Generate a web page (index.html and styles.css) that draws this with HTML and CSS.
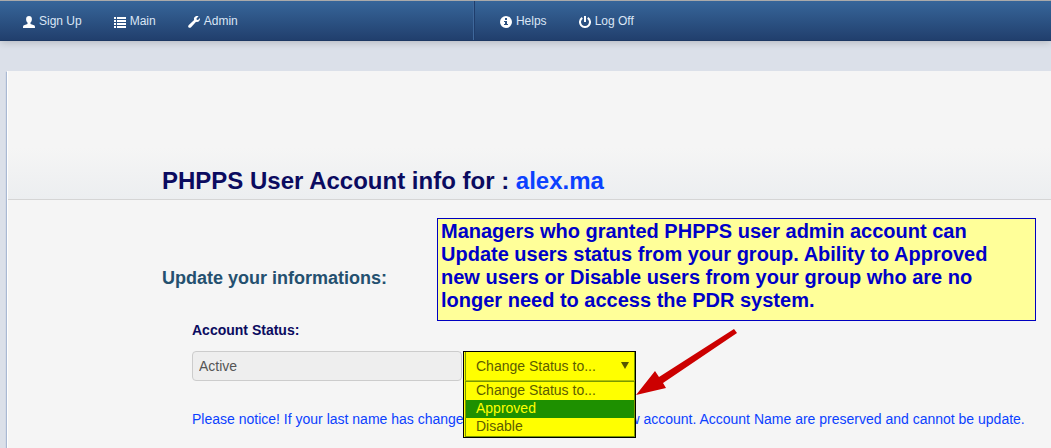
FILE: index.html
```html
<!DOCTYPE html>
<html lang="en">
<head>
    <meta charset="UTF-8">
    <meta name="viewport" content="width=device-width, initial-scale=1.0">
    <title>PHPPS User Account</title>
    <link rel="stylesheet" href="styles.css">
</head>
<body>
    <nav class="navbar">
        <div class="nav-group nav-main">
            <a href="#">
                <svg viewBox="0 0 12 12"><path d="M6 0C4.200 0 3.100 1.100 3.100 2.900c0 1.700.6 2.900 1.400 3.600v1.400L1 9.300C.2 9.700 0 10.200 0 12h12c0-1.800-.2-2.300-1-2.700L7.500 7.900V6.500c.8-.7 1.400-1.900 1.400-3.600C8.900 1.100 7.800 0 6 0z"/></svg>
                Sign Up
            </a>
            <a href="#">
                <svg viewBox="0 0 12 12"><path d="M0 1h2v2H0zM3 1h9v2H3zM0 4h2v2H0zM3 4h9v2H3zM0 7h2v2H0zM3 7h9v2H3zM0 10h2v2H0zM3 10h9v2H3z"/></svg>
                Main
            </a>
            <a href="#">
                <svg viewBox="0 0 12 12"><path d="M10.600.3 8.500 2.400l.2 1.300 1.300.3 2-2.100c.2 1.700-.3 2.900-1.300 3.600-.8.500-1.700.6-2.600.3l-5 5.400c-.7.800-1.800.9-2.500.2s-.6-1.800.2-2.500l5.300-4.900C5.600 2.200 6.200 1 7.400.4c1-.5 2.100-.5 3.200-.1z"/></svg>
                Admin
            </a>
        </div>
        <div class="nav-group nav-side">
            <a href="#">
                <svg viewBox="0 0 12 12"><path fill-rule="evenodd" d="M6 0a6 6 0 1 0 0 12A6 6 0 0 0 6 0zM5 2h2v2H5zM4 5h3v3h1v1H4V8h1V6H4z"/></svg>
                Helps
            </a>
            <a href="#">
                <svg viewBox="0 0 12 12"><path class="stroke" d="M3.300 1.800a5 5 0 1 0 5.400 0M6 0v6"/></svg>
                Log Off
            </a>
        </div>
    </nav>

    <main class="page">
        <header class="page-header">
            <h1>PHPPS User Account info for : <span>alex.ma</span></h1>
        </header>

        <form class="account">
            <h2>Update your informations:</h2>
            <div class="fields">
                <label for="status">Account Status:</label>
                <div class="row">
                    <input type="text" id="status" value="Active" readonly>
                    <div class="picker">
                        <div class="picker-open">
                            <select class="picker-box" aria-label="Change status">
                                <option>Change Status to...</option>
                            </select>
                            <span class="caret"></span>
                            <select class="picker-list" size="3" aria-label="New status">
                                <option>Change Status to...</option>
                                <option selected>Approved</option>
                                <option>Disable</option>
                            </select>
                        </div>
                    </div>
                </div>
                <p class="notice">Please notice! If your last name has changed, please sign up with a new account. Account Name are preserved and cannot be update.</p>
            </div>
        </form>

        <!-- Help callout -->
        <aside class="note">Managers who granted PHPPS user admin account can Update users status from your group. Ability to Approved new users or Disable users from your group who are no longer need to access the PDR system.</aside>
        <svg class="arrow" viewBox="0 0 102 70"><path d="M0 67 19 43l4 6L98 1l3 4L27 55l3 5z"/></svg>
    </main>
</body>
</html>
```

FILE: styles.css
```css
* {
    box-sizing: border-box;
}
body {
    margin: 0;
    min-height: 100vh;
    overflow: hidden;
    font-family: "Liberation Sans", Arial, sans-serif;
    font-size: 14px;
    background-color: #dbe0e9;
}
.navbar {
    position: relative;
    display: flex;
    height: 41px;
    border-top: 1px solid #aaa;
    border-bottom: 1px solid #1d3863;
    background: linear-gradient(#37669a, #213f6d);
    box-shadow: 0 1px 8px rgba(0, 0, 0, 0.2);
}
.nav-group {
    display: flex;
    align-items: center;
}
.nav-main {
    width: calc(45% + 1px);
    padding-left: 7px;
    border-right: 1px solid #3f689b;
}
.nav-side {
    padding-left: 9px;
    border-left: 1px solid #1f3d6b;
}
.navbar a {
    display: flex;
    align-items: center;
    gap: 4px;
    padding: 0 16px;
    font-size: 12px;
    color: #dbe6f5;
    text-decoration: none;
}
.navbar svg {
    width: 12px;
    height: 12px;
    margin-top: 2px;
    fill: #fff;
}
.navbar .stroke {
    fill: none;
    stroke: #fff;
    stroke-width: 2;
}
.page {
    position: relative;
    margin: 30px 0 0 7px;
    min-height: calc(100vh - 71px);
    background: #f5f5f5;
    border-left: 1px solid #fff;
    box-shadow: -1px 1px 1px #a9b9d3;
}
.page-header {
    padding: 95px 0 4px 154px;
    border-bottom: 1px solid #d5d5d5;
    background: linear-gradient(#f5f5f5 60%, #eceef0);
}
h1 {
    margin: 0;
    font-size: 24px;
    line-height: 29px;
    color: #0b0b60;
}
h1 span {
    color: #0b41ff;
}
.account {
    padding: 68px 0 0 154px;
}
h2 {
    margin: 0;
    font-size: 18px;
    line-height: 20px;
    color: #24506f;
}
.fields {
    padding: 34px 0 0 30px;
}
label {
    display: block;
    font-weight: bold;
    line-height: 16px;
    color: #0b0b60;
}
.row {
    display: flex;
    gap: 1px;
    margin-top: 13px;
}
input {
    width: 270px;
    height: 30px;
    padding: 0 6px;
    font: inherit;
    color: #555;
    background: #eee;
    border: 1px solid #ccc;
    border-radius: 4px;
}
.picker {
    position: relative;
    width: 173px;
    height: 30px;
}
.picker-open {
    position: absolute;
    top: 0;
    left: 0;
    width: 100%;
    padding-left: 1px;
    background: #ff0;
    border: 1px solid #000;
}
.picker select {
    appearance: none;
    display: block;
    width: 100%;
    margin: 0;
    font: inherit;
    color: #5c5c00;
    background: #ff0;
    border: 1px solid #7a9a00;
    border-radius: 0;
    outline: none;
}
.picker .picker-box {
    height: 29px;
    padding: 0 10px;
    border-top: 0;
    border-bottom-color: #b4c400;
}
.caret {
    position: absolute;
    top: 10px;
    right: 6px;
    border: solid transparent;
    border-width: 7px 4px 0;
    border-top-color: #555500;
}
.picker .picker-list {
    height: 56px;
    padding: 0;
    overflow: hidden;
}
.picker-list option {
    min-height: 18px;
    padding: 0 10px;
    line-height: 18px;
}
.picker-list option:checked {
    color: #ff0;
    background: #1e9000 linear-gradient(#1e9000, #1e9000);
}
.notice {
    margin: 29px 0 0;
    line-height: 18px;
    color: #0b41ff;
    white-space: nowrap;
}
.note {
    position: absolute;
    top: 147px;
    left: 429px;
    width: 599px;
    min-height: 103px;
    padding: 1px 40px 0 3px;
    font-size: 20px;
    font-weight: bold;
    line-height: 23px;
    color: #0000c8;
    background: #ff9;
    border: 1px solid #0000c0;
}
.arrow {
    position: absolute;
    top: 257px;
    left: 628px;
    width: 102px;
    height: 70px;
    fill: #c00;
}
```
